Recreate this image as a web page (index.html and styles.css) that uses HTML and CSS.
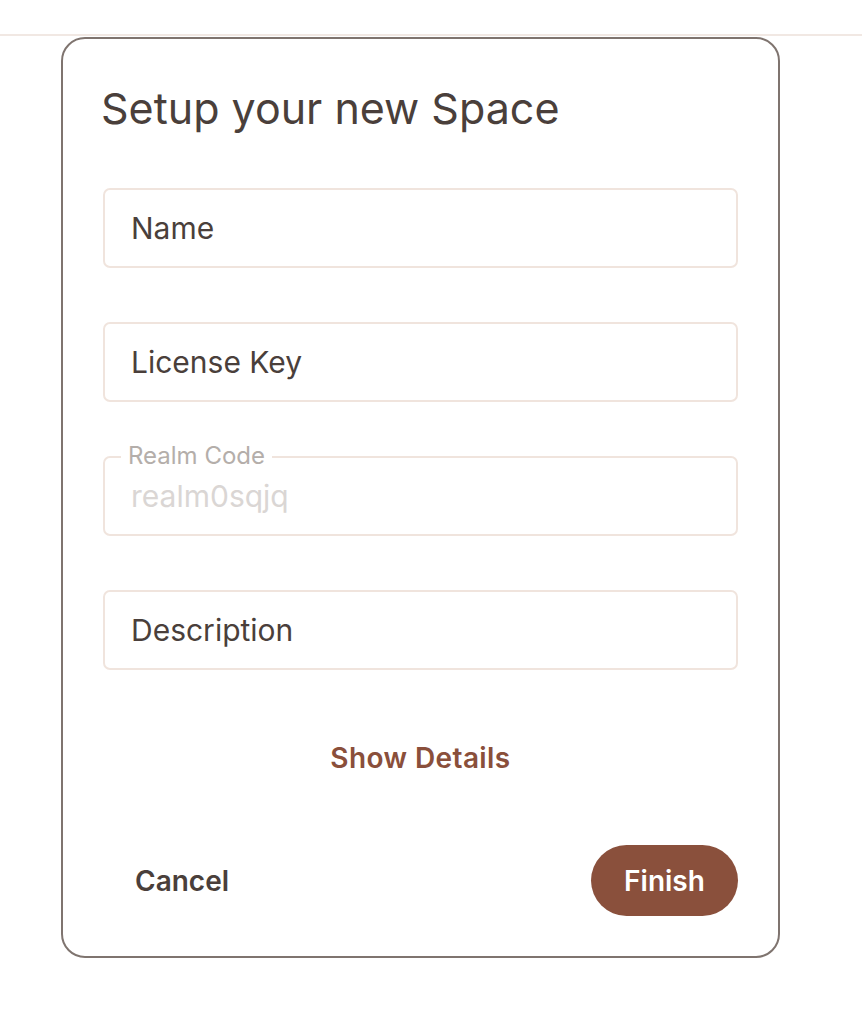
FILE: index.html
```html
<!DOCTYPE html>
<html lang="en">
<head>
<meta charset="utf-8">
<title>Setup your new Space</title>
<link rel="stylesheet" href="styles.css">
</head>
<body>
<div class="topbar"></div>
<div class="dialog">
  <h1 class="title">Setup your new Space</h1>
  <div class="fields">
    <div class="field"><span class="placeholder">Name</span></div>
    <div class="field"><span class="placeholder">License Key</span></div>
    <div class="field field-disabled">
      <span class="float-label">Realm Code</span>
      <span class="value-disabled">realm0sqjq</span>
    </div>
    <div class="field"><span class="placeholder">Description</span></div>
  </div>
  <div class="details-row"><span class="details-link">Show Details</span></div>
  <div class="actions">
    <span class="btn-cancel">Cancel</span>
    <span class="btn-finish">Finish</span>
  </div>
</div>
</body>
</html>
```
FILE: styles.css
```css
html, body {
  margin: 0;
  padding: 0;
  background: #ffffff;
}
body {
  font-family: Inter, "Noto Sans", "Liberation Sans", sans-serif;
  color: #4a3f3b;
}
.topbar {
  height: 34px;
  border-bottom: 2px solid #f1e8e3;
}
.dialog {
  box-sizing: border-box;
  margin: 1px 0 0 61px;
  width: 719px;
  height: 921px;
  border: 2px solid #7f746f;
  border-radius: 24px;
  padding: 0 40px 0 40px;
  display: flex;
  flex-direction: column;
}
.title {
  margin: 43px 0 0 -2px;
  font-size: 43px;
  font-weight: 400;
  line-height: 52px;
  letter-spacing: 0;
  color: #4a3f3b;
}
.fields {
  margin-top: 54px;
  display: flex;
  flex-direction: column;
  gap: 54px;
}
.field {
  position: relative;
  box-sizing: border-box;
  height: 80px;
  border: 2px solid #f0e4dd;
  border-radius: 7px;
  display: flex;
  align-items: center;
  padding-left: 26px;
  font-size: 30px;
}
.placeholder {
  color: #4a3f3b;
}
.float-label {
  position: absolute;
  left: 16px;
  top: -17px;
  padding: 0 7px;
  background: #ffffff;
  font-size: 24px;
  line-height: 30px;
  color: #b4aeaa;
}
.value-disabled {
  color: #dad6d4;
}
.details-row {
  margin-top: 71px;
  display: flex;
  justify-content: center;
}
.details-link {
  font-size: 28px;
  font-weight: 600;
  letter-spacing: 0.4px;
  color: #8a4f3b;
}
.actions {
  margin-top: 70px;
  display: flex;
  justify-content: space-between;
  align-items: center;
}
.btn-cancel {
  margin-left: 32px;
  font-size: 28px;
  font-weight: 600;
  color: #4a3f3b;
}
.btn-finish {
  box-sizing: border-box;
  width: 147px;
  height: 71px;
  border-radius: 36px;
  background: #8a503c;
  color: #ffffff;
  font-size: 28px;
  font-weight: 600;
  display: flex;
  align-items: center;
  justify-content: center;
  margin-right: 0;
}
```
